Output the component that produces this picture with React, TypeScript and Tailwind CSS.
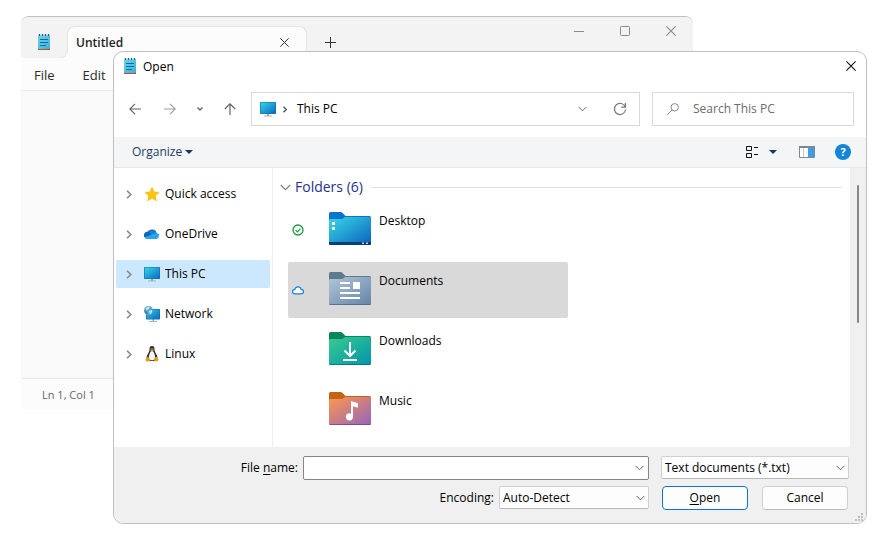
import React, { useId } from "react";

type IconProps = { className?: string };

function NotepadIcon({ className }: IconProps) {
  const id = useId();
  return (
    <svg viewBox="0 0 12 16" className={className} aria-hidden="true">
      <defs>
        <linearGradient id={id} x1="0" y1="0" x2="1" y2="1">
          <stop offset="0" stopColor="#6fd3ee" />
          <stop offset="1" stopColor="#3cb0da" />
        </linearGradient>
      </defs>
      <path d="M0 1.5h12V15H0z" fill={`url(#${id})`} />
      <path d="M0 15h11l1-1v2H0z" fill="#b4551c" />
      <path d="M1.5 0v2M4.5 0v2M7.5 0v2M10.5 0v2" stroke="#1b5d7c" strokeWidth="1.3" />
      <path d="M2 5.5h8M2 8.500h8M2 11.500h6" stroke="#0f6f9a" strokeWidth="1" />
    </svg>
  );
}

function CloseIcon({ className }: IconProps) {
  return (
    <svg viewBox="0 0 10 10" className={className} fill="none" stroke="currentColor" aria-hidden="true">
      <path d="M.4.4l9.2 9.2M9.6.4L.4 9.6" strokeWidth="1.1" />
    </svg>
  );
}

function ChevronDown({ className }: IconProps) {
  return (
    <svg viewBox="0 0 10 6" className={className} fill="none" stroke="currentColor" aria-hidden="true">
      <path d="M.7.7L5 5 9.300.7" strokeWidth="1.100" />
    </svg>
  );
}

function ChevronRight({ className }: IconProps) {
  return (
    <svg viewBox="0 0 6 10" className={className} fill="none" stroke="currentColor" aria-hidden="true">
      <path d="M.8.8L5 5 .8 9.200" strokeWidth="1.800" />
    </svg>
  );
}

function Caret({ className }: IconProps) {
  return (
    <svg viewBox="0 0 8 4" className={className} aria-hidden="true">
      <path d="M0 0h8L4 4z" fill="#17365f" />
    </svg>
  );
}

function MonitorIcon({ className }: IconProps) {
  const id = useId();
  return (
    <svg viewBox="0 0 16 16" className={className} aria-hidden="true">
      <defs>
        <linearGradient id={id} x1="0" y1="0" x2="1" y2="1">
          <stop offset="0" stopColor="#33d6e6" />
          <stop offset="1" stopColor="#0f68c4" />
        </linearGradient>
      </defs>
      <path d="M7 12.500h2V15H7z" fill="#9aa5ad" />
      <path d="M4 14.500h8v1H4z" fill="#a9b3ba" />
      <rect x="0" y="1" width="16" height="12" rx=".8" fill="#0d6fa8" />
      <rect x=".6" y="1.600" width="14.800" height="10.800" rx=".4" fill={`url(#${id})`} />
    </svg>
  );
}

function StarIcon({ className }: IconProps) {
  return (
    <svg viewBox="0 0 16 16" className={className} aria-hidden="true">
      <path
        d="M8 1.200l2.100 4.600 5 .6-3.700 3.400 1 5L8 12.300l-4.400 2.500 1-5L.9 6.400l5-.6z"
        fill="#fdc40f"
        stroke="#f7b500"
        strokeWidth=".5"
        strokeLinejoin="round"
      />
    </svg>
  );
}

function OneDriveIcon({ className }: IconProps) {
  return (
    <svg viewBox="0 0 16 16" className={className} aria-hidden="true">
      <path d="M3 12.500A3.200 3.200 0 0 1 .6 7.300 3.600 3.600 0 0 1 4 5.600a4.700 4.700 0 0 1 8.600 1.700L8 10z" fill="#0a63bd" />
      <path d="M5 6.300c1.500-2.400 6-2.600 7.500 1a3.600 3.600 0 0 1 3 2l-5 2z" fill="#1583d8" />
      <path d="M3.500 13a3.300 3.300 0 0 1-2.900-1.800L8.500 8.300c1.300-.8 2.700-1.100 4-.9a2.900 2.900 0 0 1 .3 5.600z" fill="#2aa5ea" />
    </svg>
  );
}

function NetworkIcon({ className }: IconProps) {
  const id = useId();
  return (
    <svg viewBox="0 0 16 16" className={className} aria-hidden="true">
      <defs>
        <linearGradient id={id} x1="0" y1="0" x2="1" y2="1">
          <stop offset="0" stopColor="#2ccbe4" />
          <stop offset="1" stopColor="#0f68c4" />
        </linearGradient>
      </defs>
      <path d="M8.500 13h1.500V15.500H8.500z" fill="#9aa5ad" />
      <path d="M5 15h8v1H5z" fill="#a9b3ba" />
      <rect x="2" y="3" width="14" height="10.500" rx=".7" fill="#0d6fa8" />
      <rect x="2.600" y="3.600" width="12.800" height="9.300" fill={`url(#${id})`} />
      <circle cx="4.500" cy="4.500" r="4.500" fill="#5aa6cf" />
      <path d="M1.500 2.500C3 .5 5 .3 6 1L4.500 3.500 2.500 4zM5 5l3-1c.5 2-.5 3.500-2 4.200z" fill="#c9e6f3" />
      <path d="M.5 4.500L3 6l.5 2.500C1.500 8 .3 6.500.5 4.500z" fill="#3782b3" />
    </svg>
  );
}

function LinuxIcon({ className }: IconProps) {
  return (
    <svg viewBox="0 0 16 16" className={className} aria-hidden="true">
      <path d="M8 0C6 0 5.400 1.300 5.500 3.200c.1 2-.6 2.700-1.500 4.500-.7 1.400-1.600 3-1.500 5L5 15h6l2.500-2.300c.1-2-.8-3.600-1.500-5-.9-1.800-1.600-2.500-1.500-4.500C10.600 1.300 10 0 8 0z" fill="#2b2b2b" />
      <path d="M8 5c-1.300 0-1.600.8-2.200 2.300C5.100 9 4.700 10 5 12c.3 1.700 1.300 2.300 3 2.300s2.700-.6 3-2.300c.3-2-.1-3-.8-4.700C9.600 5.800 9.300 5 8 5z" fill="#f5f5f2" />
      <path d="M6.600 2.500h1v1.200h-1zM8.400 2.500h1v1.200h-1z" fill="#ddd" />
      <path d="M6.300 4.200L8 3.500l1.700.7L8 5.600z" fill="#e3a417" />
      <path d="M3.600 10.800c.8 0 1.700 1.700 2.400 2.700.6 1.100-.2 2.300-1.500 2.100-1.200-.2-2.800-.4-3-1.100-.3-.8.200-1 .3-1.800.200-.9 1-.7 1.300-1.200zM12.400 10.800c-.9 0-1.700 1.400-2.100 2.500-.5 1.400.1 2.500 1.300 2.300 1.200-.2 2.800-.7 3-1.500.1-.7-.6-.9-.8-1.500-.2-.8-.9-1.200-1.400-1.800z" fill="#e0a21a" />
    </svg>
  );
}

function Folder({
  tab,
  from,
  to,
  edge,
  children,
}: {
  tab: string;
  from: string;
  to: string;
  edge: string;
  children: React.ReactNode;
}) {
  const id = useId();
  return (
    <svg viewBox="0 0 42 33" className="h-[33px] w-[42px] shrink-0" aria-hidden="true">
      <defs>
        <linearGradient id={id} x1="0" y1="0" x2="1" y2="1">
          <stop offset="0.05" stopColor={from} />
          <stop offset="1" stopColor={to} />
        </linearGradient>
      </defs>
      <path d="M0 1.500A1.500 1.500 0 0 1 1.500 0H11c1.200 0 1.800.3 2.600 1.100L16.500 4h24A1.500 1.500 0 0 1 42 5.500V12H0z" fill={tab} />
      <path d="M0 9h42v22.500a1.500 1.500 0 0 1-1.500 1.500h-39A1.500 1.500 0 0 1 0 31.500z" fill={edge} />
      <path d="M0 8.500A1.500 1.500 0 0 1 1.500 7H12c1.200 0 2-.3 2.700-1L16 5h24.500A1.500 1.500 0 0 1 42 6.500V31a1.200 1.200 0 0 1-1.200 1.200H1.200A1.200 1.200 0 0 1 0 31z" fill={`url(#${id})`} />
      {children}
    </svg>
  );
}

const folders = [
  {
    name: "Desktop",
    status: "synced",
    icon: (
      <Folder tab="#0874cf" from="#36d3e4" to="#0d62bd" edge="#0b4f92">
        <path d="M0 30h42v1.500a1.500 1.500 0 0 1-1.500 1.500h-39A1.500 1.500 0 0 1 0 31.500z" fill="#0a3f75" />
        <path d="M3 10h3v3H3zM3 15h3v3H3z" fill="#fff" />
        <path d="M33 30.500h2v1.500h-2zM37 30.500h2v1.500h-2z" fill="#b9d4ec" />
      </Folder>
    ),
  },
  {
    name: "Documents",
    status: "cloud",
    selected: true,
    icon: (
      <Folder tab="#5d7c8b" from="#afc1d8" to="#6685a8" edge="#4c6580">
        <path d="M11 10h10v2H11zM11 15h10v2H11zM24 10h7v7h-7zM11 20h20v2H11zM11 25h20v2H11z" fill="#fff" />
      </Folder>
    ),
  },
  {
    name: "Downloads",
    icon: (
      <Folder tab="#0b8460" from="#36c990" to="#0395aa" edge="#056a73">
        <path d="M21 10v14M15.500 18.500L21 24l5.500-5.500" stroke="#fff" strokeWidth="2" fill="none" />
        <path d="M14 27h14v2H14z" fill="#fff" />
      </Folder>
    ),
  },
  {
    name: "Music",
    icon: (
      <Folder tab="#c66312" from="#fb9553" to="#9565b8" edge="#6c4380">
        <path d="M22 9l7 2.200v4.500l-5-1.500V25a3.600 3.600 0 1 1-2-3.300z" fill="#fff" />
      </Folder>
    ),
  },
];

function StatusIcon({ status }: { status?: string }) {
  if (status === "synced") {
    return (
      <svg viewBox="0 0 12 12" className="h-3 w-3 self-center" fill="none" stroke="#1e9440" aria-label="Synced">
        <circle cx="6" cy="6" r="5" strokeWidth="1.300" />
        <path d="M3.700 6.100l1.700 1.700 3-3.200" strokeWidth="1.200" />
      </svg>
    );
  }
  if (status === "cloud") {
    return (
      <svg viewBox="0 0 12 12" className="h-3 w-3 self-center" fill="#fff" stroke="#1a7fd6" aria-label="Online only">
        <path d="M3 9.900a2.300 2.300 0 0 1-.2-4.600 3.300 3.300 0 0 1 6.400 0 2.300 2.300 0 0 1-.2 4.600z" strokeWidth="1.200" />
      </svg>
    );
  }
  return <span className="w-3" />;
}

const places = [
  { name: "Quick access", Icon: StarIcon },
  { name: "OneDrive", Icon: OneDriveIcon },
  { name: "This PC", Icon: MonitorIcon, selected: true },
  { name: "Network", Icon: NetworkIcon },
  { name: "Linux", Icon: LinuxIcon },
];

function NotepadWindow() {
  return (
    <section
      aria-label="Notepad"
      className="absolute top-4 right-[195px] left-[21px] flex h-[393px] flex-col overflow-hidden rounded-lg rounded-b-sm border-t border-[#bfc1c1] bg-[#f9f9f9]"
    >
      <header className="flex h-[41px] shrink-0 bg-[#f3f3f3]">
        <div className="flex w-[46px] items-center pt-[9px] pl-[17px]">
          <NotepadIcon className="h-4 w-3" />
        </div>
        <div className="relative mt-[9px] flex w-[240px] items-center rounded-t-lg border border-b-0 border-[#e5e5e5] bg-[#fcfcfc] pr-[17px] pl-2">
          <svg viewBox="0 0 8 8" className="absolute right-full bottom-0 h-2 w-2" aria-hidden="true">
            <path d="M8 0v8H0c5 0 8-3 8-8z" fill="#fcfcfc" />
            <path d="M0 7.500c5 0 7.500-2.500 7.500-7.500" fill="none" stroke="#e5e5e5" />
          </svg>
          <span className="flex-1 text-xs font-semibold text-[#1f1f1f]">Untitled</span>
          <button type="button" aria-label="Close tab" className="text-[#333]">
            <CloseIcon className="h-[9px] w-[9px]" />
          </button>
        </div>
        <button type="button" aria-label="New tab" className="mt-[10px] ml-[18px] text-[#333]">
          <svg viewBox="0 0 11 11" className="h-[11px] w-[11px]" stroke="currentColor" aria-hidden="true">
            <path d="M5.500 0v11M0 5.500h11" />
          </svg>
        </button>
        <div className="ml-auto flex items-start gap-9 pt-[9px] pr-[17px] text-[#8a8a8a]">
          <button type="button" aria-label="Minimize">
            <svg viewBox="0 0 10 10" className="h-[10px] w-[10px]" stroke="currentColor" aria-hidden="true">
              <path d="M0 5.500h10" />
            </svg>
          </button>
          <button type="button" aria-label="Maximize">
            <svg viewBox="0 0 10 10" className="h-[10px] w-[10px]" fill="none" stroke="currentColor" aria-hidden="true">
              <rect x=".5" y=".5" width="9" height="9" rx=".8" />
            </svg>
          </button>
          <button type="button" aria-label="Close window">
            <CloseIcon className="h-[10px] w-[10px]" />
          </button>
        </div>
      </header>
      <nav className="flex h-[33px] shrink-0 items-center gap-7 border-b border-[#ececec] bg-[#fcfcfc] pt-[3px] pl-[13px] text-[13px] text-[#2b2b2b]">
        <button type="button">File</button>
        <button type="button">Edit</button>
      </nav>
      <div className="flex-1" />
      <footer className="flex h-[31px] shrink-0 items-center border-t border-[#e8e8e8] bg-[#fcfcfc] pt-[2px] pl-[21px] text-[11px] text-[#666]">
        Ln 1, Col 1
      </footer>
    </section>
  );
}

function AddressRow() {
  return (
    <div className="flex h-[34px] pr-3 pl-[3px] text-[#666]">
      <button type="button" aria-label="Back" className="flex w-9 items-center justify-center">
        <svg viewBox="0 0 12 12" className="h-3 w-3" fill="none" stroke="currentColor" strokeWidth="1.200" aria-hidden="true">
          <path d="M12 6H.8M6 .8L.8 6 6 11.200" />
        </svg>
      </button>
      <button type="button" aria-label="Forward" className="flex w-[34px] items-center justify-center text-[#a0a0a0]">
        <svg viewBox="0 0 12 12" className="h-3 w-3" fill="none" stroke="currentColor" strokeWidth="1.200" aria-hidden="true">
          <path d="M0 6h11.200M6 .8L11.200 6 6 11.200" />
        </svg>
      </button>
      <button type="button" aria-label="Recent locations" className="flex w-[26px] items-center justify-center">
        <svg viewBox="0 0 6 4" className="h-1 w-[6px]" fill="none" stroke="currentColor" strokeWidth="1.400" aria-hidden="true">
          <path d="M.5.5L3 3 5.500.5" />
        </svg>
      </button>
      <button type="button" aria-label="Up" className="flex w-[34px] items-center justify-center">
        <svg viewBox="0 0 12 12" className="h-3 w-3" fill="none" stroke="currentColor" strokeWidth="1.200" aria-hidden="true">
          <path d="M6 12V.8M.8 6L6 .8 11.200 6" />
        </svg>
      </button>
      <div className="ml-1 flex min-w-0 flex-1 items-center border border-[#d9d9d9] pr-3 pl-2">
        <MonitorIcon className="h-4 w-4" />
        <svg viewBox="0 0 4 7" className="ml-[7px] h-[7px] w-1" fill="none" stroke="#555" strokeWidth="1.400" aria-hidden="true">
          <path d="M.5.7l2.800 2.800L.5 6.300" />
        </svg>
        <button type="button" className="ml-[10px] text-black">
          This PC
        </button>
        <button type="button" aria-label="Previous locations" className="ml-auto">
          <ChevronDown className="h-[6px] w-[9px]" />
        </button>
        <button type="button" aria-label="Refresh" className="ml-[26px] text-[#777]">
          <svg viewBox="0 0 14 14" className="h-[14px] w-[14px]" fill="none" stroke="currentColor" strokeWidth="1.200" aria-hidden="true">
            <path d="M12.300 5A5.600 5.600 0 1 0 12.600 7.500M12.400 1v4.200H8.300" />
          </svg>
        </button>
      </div>
      <label className="ml-3 flex w-[202px] items-center border border-[#d9d9d9] pl-[14px]">
        <svg viewBox="0 0 12 12" className="h-3 w-3 shrink-0" fill="none" stroke="#8a8a8a" aria-hidden="true">
          <circle cx="7.700" cy="4.300" r="3.700" />
          <path d="M5.100 6.900L.3 11.700" />
        </svg>
        <input
          type="text"
          aria-label="Search This PC"
          placeholder="Search This PC"
          className="ml-[14px] w-full min-w-0 bg-transparent outline-none placeholder:text-[#6b6b6b]"
        />
      </label>
    </div>
  );
}

function Toolbar() {
  return (
    <div className="mt-[11px] flex h-[31px] items-center border-b border-[#e6e8ea] bg-[#f4f5f7] pr-[15px] pl-[18px]">
      <button type="button" className="flex items-center gap-[3px] text-[#1b3a63]">
        Organize
        <Caret className="h-1 w-2" />
      </button>
      <button type="button" aria-label="View" className="ml-auto flex items-center gap-[11px]">
        <svg viewBox="0 0 12 12" className="h-3 w-3" fill="none" stroke="#111" aria-hidden="true">
          <path d="M.5.5h5v4h-5zM.5 7.500h5v4h-5zM8 1.500h4M8 8.500h4" />
        </svg>
        <Caret className="h-1 w-2" />
      </button>
      <button type="button" aria-label="Preview pane" className="ml-[22px]">
        <svg viewBox="0 0 16 12" className="h-3 w-4" aria-hidden="true">
          <path d="M.5.5h15v11H.5z" fill="#fff" stroke="#7d8790" />
          <path d="M0 0h16v2H0z" fill="#7d8790" />
          <path d="M4 2h1v9H4z" fill="#c6ccd1" />
          <path d="M9 2h6v9H9z" fill="#3f9be6" />
        </svg>
      </button>
      <button
        type="button"
        aria-label="Help"
        className="ml-5 flex h-4 w-4 items-center justify-center rounded-full bg-[#0f86d8] text-[11px] font-bold text-white"
      >
        ?
      </button>
    </div>
  );
}

function Browser() {
  return (
    <div className="flex">
      <nav aria-label="Places" className="flex w-[159px] shrink-0 flex-col gap-3 border-r border-[#f0f0f0] px-[2px] pt-3">
        {places.map(({ name, Icon, selected }) => (
          <button
            key={name}
            type="button"
            className={
              selected
                ? "flex h-7 items-center rounded-[2px] bg-[#cce8ff] pl-[10px]"
                : "flex h-7 items-center rounded-[2px] pl-[10px]"
            }
          >
            <ChevronRight className="h-[9px] w-[6px] text-[#8a8a8a]" />
            <Icon className="ml-3 h-4 w-4" />
            <span className="ml-[5px]">{name}</span>
          </button>
        ))}
      </nav>
      <main className="min-w-0 flex-1 pt-2 pr-2 pb-[9px] pl-[7px]">
        <h2 className="flex h-[22px] items-center">
          <ChevronDown className="h-[7px] w-[11px] text-[#808080]" />
          <span className="ml-1 text-sm text-[#1e3287]">Folders (6)</span>
          <span className="ml-2 h-px flex-1 bg-[#e2e2e2]" />
        </h2>
        <ul className="mt-1 ml-2 flex max-w-[280px] flex-col gap-1">
          {folders.map((folder) => (
            <li key={folder.name}>
              <button
                type="button"
                className={
                  folder.selected
                    ? "flex h-14 w-full items-start rounded-[2px] bg-[#d9d9d9] pl-1"
                    : "flex h-14 w-full items-start rounded-[2px] pl-1"
                }
              >
                <StatusIcon status={folder.status} />
                <span className="mt-[10px] ml-[25px]">{folder.icon}</span>
                <span className="mt-[10px] ml-2 leading-[18px]">{folder.name}</span>
              </button>
            </li>
          ))}
        </ul>
      </main>
      <div className="flex w-4 shrink-0 justify-center bg-[#f0f0f0] pt-[17px]">
        <div className="h-[138px] w-[2px] rounded-full bg-[#868686]" />
      </div>
    </div>
  );
}

function SelectBox({ id, options, label }: { id: string; options: string[]; label?: string }) {
  return (
    <div className="relative">
      <select
        id={id}
        aria-label={label}
        className="block h-[23px] w-full appearance-none rounded-[2px] border border-[#d0d0d0] border-b-[#b8b8b8] bg-[#fdfdfd] pr-5 pl-[3px] outline-none"
      >
        {options.map((option) => (
          <option key={option}>{option}</option>
        ))}
      </select>
      <ChevronDown className="pointer-events-none absolute top-[9px] right-1 h-[6px] w-[9px] text-[#606060]" />
    </div>
  );
}

function DialogFooter() {
  return (
    <footer className="relative flex gap-3 rounded-b-[9px] bg-[#f0f0f0] pt-[9px] pr-[17px] pb-[13px]">
      <div className="flex min-w-0 flex-1 flex-col gap-[6px]">
        <div className="flex items-center">
          <label htmlFor="file-name" className="w-[184px] text-right">
            File <span className="underline underline-offset-2">n</span>ame:
          </label>
          <div className="ml-[5px] flex h-6 min-w-0 flex-1 items-center rounded-[2px] border border-[#868686] bg-white pr-1">
            <input id="file-name" type="text" className="min-w-0 flex-1 bg-transparent px-1 outline-none" />
            <button type="button" aria-label="Show file names" className="text-[#606060]">
              <ChevronDown className="h-[6px] w-[9px]" />
            </button>
          </div>
        </div>
        <div className="flex items-center justify-end gap-[5px]">
          <label htmlFor="encoding">Encoding:</label>
          <div className="w-[150px]">
            <SelectBox id="encoding" options={["Auto-Detect", "ANSI", "UTF-8"]} />
          </div>
        </div>
      </div>
      <div className="flex w-[188px] flex-col gap-[7px]">
        <SelectBox id="file-type" label="File type" options={["Text documents (*.txt)", "All files"]} />
        <div className="flex gap-[14px] px-px">
          <button type="button" className="h-6 flex-1 rounded border border-[#0a78d0] bg-[#fdfdfd]">
            <span className="underline underline-offset-2">O</span>pen
          </button>
          <button type="button" className="h-6 flex-1 rounded border border-[#d0d0d0] border-b-[#bcbcbc] bg-[#fdfdfd]">
            Cancel
          </button>
        </div>
      </div>
      <svg viewBox="0 0 8 8" className="absolute right-[3px] bottom-[2px] h-2 w-2" fill="#bdbdbd" aria-hidden="true">
        <path d="M6 0h2v2H6zM3 3h2v2H3zM6 3h2v2H6zM0 6h2v2H0zM3 6h2v2H3zM6 6h2v2H6z" />
      </svg>
    </footer>
  );
}

export default function App() {
  return (
    <div className="relative min-h-screen bg-white pt-[51px] pr-[21px] pb-4 pl-[113px] font-['Open_Sans','Noto_Sans',sans-serif] text-xs text-black">
      <NotepadWindow />
      <section role="dialog" aria-label="Open" className="relative rounded-[10px] border border-[#bfbfbf] bg-white">
        <header className="flex h-10 items-start pt-[6px] pr-[10px] pl-[10px]">
          <NotepadIcon className="h-4 w-3" />
          <h1 className="ml-[7px] leading-[18px]">Open</h1>
          <button type="button" aria-label="Close" className="mt-[3px] ml-auto text-[#111]">
            <CloseIcon className="h-[10px] w-[10px]" />
          </button>
        </header>
        <AddressRow />
        <Toolbar />
        <Browser />
        <DialogFooter />
      </section>
    </div>
  );
}
